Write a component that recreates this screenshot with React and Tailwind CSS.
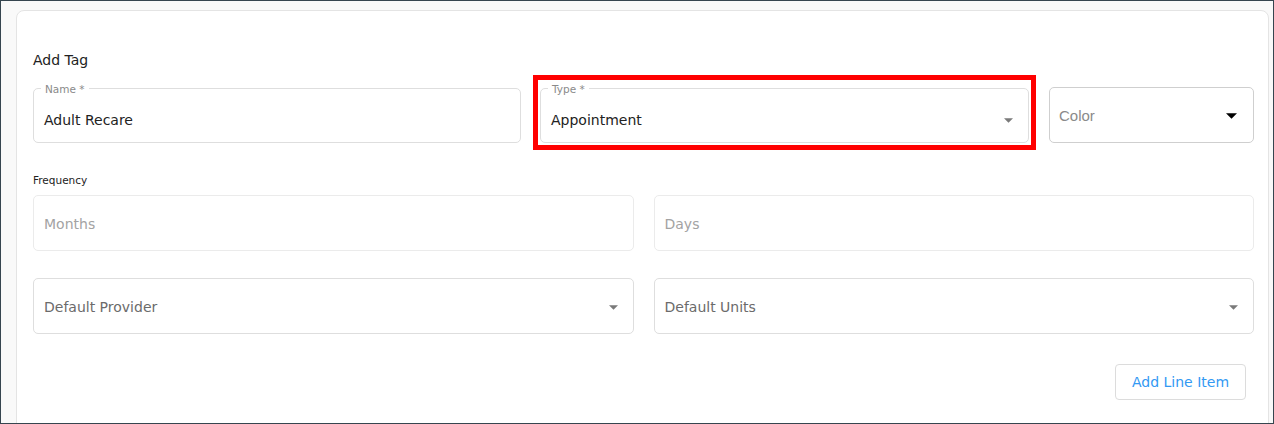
import React from "react"

const font = "font-['DejaVu_Sans',sans-serif]"

function Caret({ className = "fill-[#7a7a7a]", w = 9, h = 5 }) {
  return (
    <svg width={w} height={h} viewBox="0 0 10 5" className={className}>
      <path d="M0 0h10L5 5z" />
    </svg>
  )
}

function OutlinedField({ label, value, caret, className = "" }) {
  return (
    <div className={`relative h-[55px] border border-[#dedede] rounded-[5px] bg-white flex items-center pl-[10px] pr-[15px] pt-[9px] ${className}`}>
      <span className="absolute -top-[6px] left-[7px] bg-white px-[4px] text-[10.5px] leading-[13px] text-[#8a8a8a]">{label}</span>
      <span className="flex-1 text-[14px] text-[#222]">{value}</span>
      {caret && <Caret />}
    </div>
  )
}

function PlainField({ text, caret, textColor = "text-[#a3a3a3]", border = "border-[#ebebeb]" }) {
  return (
    <div className={`h-[56px] border ${border} rounded-[5px] bg-white flex items-center pl-[10px] pr-[15px] pt-[2px]`}>
      <span className={`flex-1 text-[14px] ${textColor}`}>{text}</span>
      {caret && <Caret />}
    </div>
  )
}

export default function App() {
  return (
    <div className={`w-[1274px] h-[424px] overflow-hidden border border-[#36454f] bg-[#f9f9f9] pt-[9px] pl-[15px] ${font}`}>
      <div className="w-[1253px] h-[440px] bg-white border border-[#e4e4e4] rounded-[8px] pl-[16px] pr-[14px] pt-[39px]">
        <h2 className="text-[14px] leading-[20px] text-[#222]">Add Tag</h2>

        <div className="flex items-start mt-[5px]">
          <OutlinedField label="Name *" value="Adult Recare" className="w-[488px] mt-[13px]" />
          <div className="ml-[12px] w-[503px] border-[5px] border-[#ff0000] pt-[8px] pb-[2px] px-[2px]">
            <OutlinedField label="Type *" value="Appointment" caret />
          </div>
          <div className="ml-[13px] mt-[12px] w-[205px] h-[56px] border border-[#cfcfcf] rounded-[5px] flex items-center pl-[9px] pr-[16px] pt-[2px]">
            <span className="flex-1 text-[15px] text-[#8a8a8a] font-['Liberation_Sans',sans-serif]">Color</span>
            <Caret className="fill-black" w={11} h={6} />
          </div>
        </div>

        <p className="mt-[23px] text-[10.5px] leading-[14px] text-[#222]">Frequency</p>

        <div className="grid grid-cols-2 gap-x-[20px] mt-[8px]">
          <PlainField text="Months" />
          <PlainField text="Days" />
        </div>

        <div className="grid grid-cols-2 gap-x-[20px] mt-[27px]">
          <PlainField text="Default Provider" caret textColor="text-[#6b6b6b]" border="border-[#dedede]" />
          <PlainField text="Default Units" caret textColor="text-[#6b6b6b]" border="border-[#dedede]" />
        </div>

        <div className="flex justify-end mt-[30px] pr-[8px]">
          <button className="h-[36px] w-[131px] border border-[#dcdcdc] rounded-[4px] bg-white text-[14px] text-[#3399f3]">
            Add Line Item
          </button>
        </div>
      </div>
    </div>
  )
}
